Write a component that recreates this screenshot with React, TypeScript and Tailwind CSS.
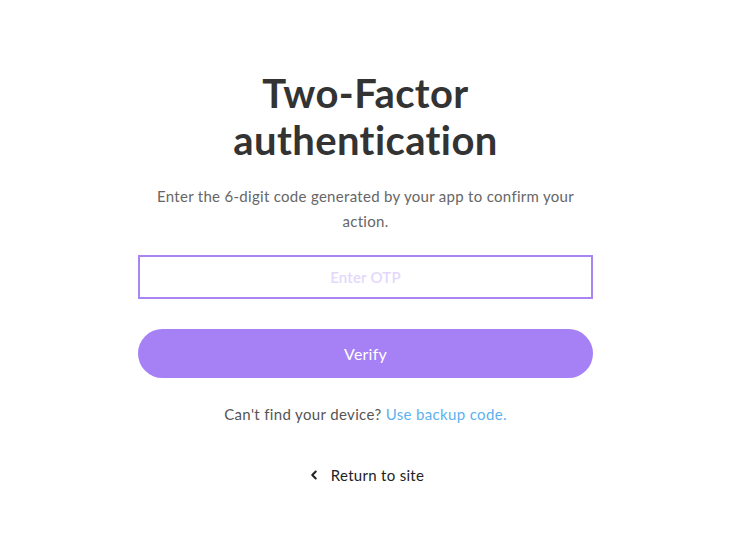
import { ChevronLeft } from "lucide-react";

export default function App() {
  return (
    <div className="min-h-screen bg-white flex justify-center pr-[1px] font-['Lato',_'Noto_Sans',_sans-serif]">
      <div className="w-[455px] flex flex-col items-center pt-[70px]">
        <h1 className="w-[320px] text-center text-[40px] leading-[47px] font-bold text-[#333] tracking-[0.4px]">
          Two-Factor authentication
        </h1>
        <p className="mt-[20px] w-[440px] text-center text-[15px] leading-[25px] text-[#666] tracking-[0.3px]">
          Enter the 6-digit code generated by your app to confirm your action.
        </p>
        <input
          placeholder="Enter OTP"
          className="mt-[21px] w-full h-[44px] border-2 border-[#a985f4] text-center text-[15px] font-semibold tracking-[0.2px] outline-none placeholder:text-[#e3d8fc]"
        />
        <button className="mt-[30px] w-full h-[49px] rounded-full bg-[#a680f5] text-white text-[16px] tracking-[0.2px]">
          Verify
        </button>
        <div className="mt-[24px] text-[15px] leading-[24px] text-[#555] tracking-[0.35px]">
          Can't find your device? <a className="text-[#5eb0ee] cursor-pointer">Use backup code.</a>
        </div>
        <a className="mt-[37px] flex items-center gap-[10px] text-[15px] leading-[24px] text-[#222] tracking-[0.3px] cursor-pointer">
          <ChevronLeft size={14} strokeWidth={3.5} />
          Return to site
        </a>
      </div>
    </div>
  );
}
